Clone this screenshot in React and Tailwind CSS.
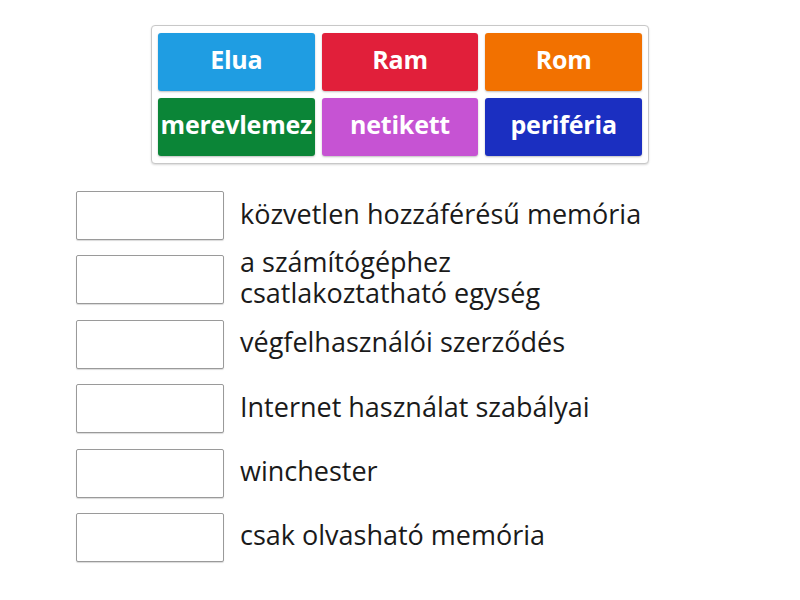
const tiles = [
  { label: "Elua", bg: "bg-[#1f9de2]" },
  { label: "Ram", bg: "bg-[#e11f3a]" },
  { label: "Rom", bg: "bg-[#f27100]" },
  { label: "merevlemez", bg: "bg-[#0b8537]" },
  { label: "netikett", bg: "bg-[#c653d3]" },
  { label: "periféria", bg: "bg-[#1b2fc1]" },
];

const rows = [
  "közvetlen hozzáférésű memória",
  "a számítógéphez csatlakoztatható egység",
  "végfelhasználói szerződés",
  "Internet használat szabályai",
  "winchester",
  "csak olvasható memória",
];

export default function App() {
  return (
    <div className="min-h-[600px] bg-white pt-[25px] font-['Open_Sans',sans-serif]">
      <div className="mx-auto w-[498px] rounded-[4px] border border-[#c8c8c8] bg-white px-[6px] py-[7px] shadow-[0_1px_2px_rgba(0,0,0,0.15)]">
        <div className="grid grid-cols-3 gap-[7px]">
          {tiles.map((t) => (
            <div
              key={t.label}
              className={`${t.bg} flex h-[58px] items-center justify-center rounded-[3px] pb-[5px] text-[25px] font-bold tracking-[-0.2px] text-white shadow-[0_1px_2px_rgba(0,0,0,0.25)]`}
            >
              {t.label}
            </div>
          ))}
        </div>
      </div>

      <div className="mt-[27px] ml-[76px] flex flex-col gap-[15.4px]">
        {rows.map((text) => (
          <div key={text} className="flex h-[49px] items-center gap-[16px]">
            <div className="h-[49px] w-[148px] shrink-0 rounded-[2px] border border-[#9a9a9a] bg-white shadow-[0_1px_1px_rgba(0,0,0,0.15)]" />
            <div className="w-[420px] pb-[5px] text-[27px] leading-[31px] text-[#1a1a1a]">{text}</div>
          </div>
        ))}
      </div>
    </div>
  );
}
